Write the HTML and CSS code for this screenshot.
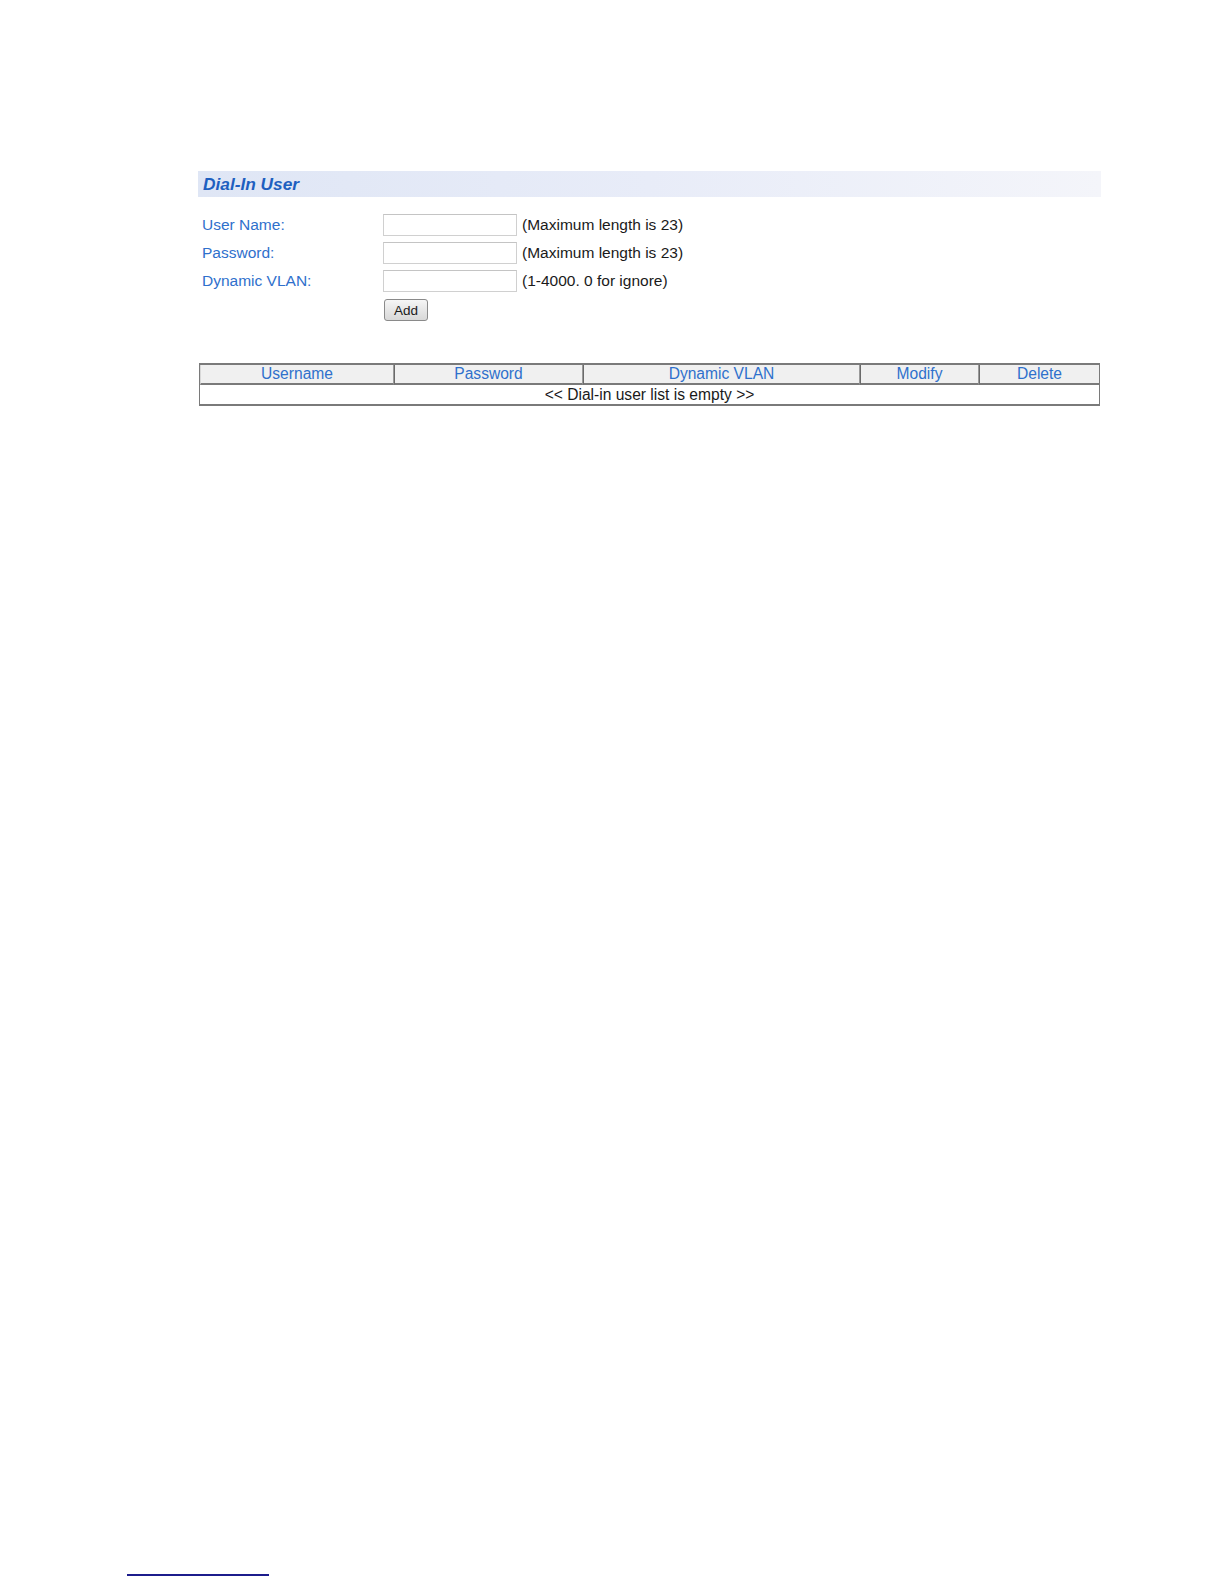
FILE: index.html
```html
<!DOCTYPE html>
<html>
<head>
<meta charset="utf-8">
<link rel="stylesheet" href="styles.css">
</head>
<body>
<div class="page">
  <div class="panel">
    <div class="title-bar"><span class="title">Dial-In User</span></div>
    <div class="form">
      <div class="row">
        <label class="label">User Name:</label>
        <input class="field" type="text">
        <span class="hint">(Maximum length is 23)</span>
      </div>
      <div class="row">
        <label class="label">Password:</label>
        <input class="field" type="password">
        <span class="hint">(Maximum length is 23)</span>
      </div>
      <div class="row">
        <label class="label">Dynamic VLAN:</label>
        <input class="field" type="text">
        <span class="hint">(1-4000. 0 for ignore)</span>
      </div>
      <div class="row button-row">
        <span class="label"></span>
        <button class="btn">Add</button>
      </div>
    </div>
    <table class="list">
      <tr>
        <th class="c1">Username</th>
        <th class="c2">Password</th>
        <th class="c3">Dynamic VLAN</th>
        <th class="c4">Modify</th>
        <th class="c5">Delete</th>
      </tr>
      <tr>
        <td colspan="5">&lt;&lt; Dial-in user list is empty &gt;&gt;</td>
      </tr>
    </table>
  </div>
  <div class="footer-line"></div>
</div>
</body>
</html>
```
FILE: styles.css
```css
html, body {
  margin: 0;
  padding: 0;
  background: #ffffff;
}
body {
  font-family: "Liberation Sans", Arial, sans-serif;
  font-size: 15.5px;
  color: #1a1a1a;
}
.page {
  height: 1584px;
  display: flex;
  flex-direction: column;
  overflow: hidden;
}
.panel {
  padding-top: 171px;
  margin-left: 198px;
  width: 903px;
}
.title-bar {
  height: 26px;
  background: linear-gradient(to right, #dfe6f5 0%, #e8ecf8 50%, #f4f5fa 100%);
  display: flex;
  align-items: center;
  padding-left: 5px;
}
.title {
  font-weight: bold;
  font-style: italic;
  font-size: 17.3px;
  color: #1e5fc0;
}
.form {
  padding-top: 14px;
  padding-left: 4px;
}
.row {
  display: flex;
  align-items: center;
  height: 28px;
}
.label {
  width: 181px;
  color: #2f70cc;
  flex: none;
}
.field {
  width: 134px;
  height: 22px;
  box-sizing: border-box;
  border: 1px solid #d0d0d0;
  border-top-color: #c4c4c4;
  background: #ffffff;
  margin: 0;
  padding: 0 2px;
  font-family: inherit;
  font-size: 14px;
}
.hint {
  margin-left: 5px;
  color: #1a1a1a;
}
.button-row {
  height: 30px;
  align-items: flex-start;
  padding-top: 4px;
  box-sizing: border-box;
}
.btn {
  margin-left: 1px;
  width: 44px;
  height: 22px;
  border: 1px solid #8a8a8a;
  border-radius: 3px;
  background: linear-gradient(to bottom, #f6f6f6 0%, #e6e6e6 50%, #d8d8d8 100%);
  font-family: inherit;
  font-size: 13.5px;
  color: #1a1a1a;
  padding: 0;
}
.list {
  margin-top: 38px;
  margin-left: 1px;
  width: 901px;
  border-collapse: separate;
  border-spacing: 0;
  border: 1px solid #7a7a7a;
  border-top: 2px solid #7a7a7a;
  border-bottom: 2px solid #7a7a7a;
  table-layout: fixed;
  font-size: 15.6px;
}
.list th {
  height: 18px;
  background: #f0f0f0;
  font-weight: normal;
  color: #2f70cc;
  padding: 0;
  border-right: 1px solid #9a9a9a;
  border-left: 1px solid #6a6a6a;
  border-bottom: 2px solid #7a7a7a;
  text-align: center;
  line-height: 18px;
}
.list th.c1 { border-left: 1px solid #d8d8d8; width: 192px; }
.list th.c2 { width: 187px; }
.list th.c3 { width: 275px; }
.list th.c4 { width: 117px; }
.list th.c5 { border-right: none; }
.list td {
  height: 19px;
  line-height: 19px;
  padding: 0;
  text-align: center;
  color: #1a1a1a;
}
.footer-line {
  margin-top: auto;
  margin-bottom: 8px;
  margin-left: 127px;
  width: 142px;
  height: 2px;
  background: #1c1c8c;
  flex: none;
}
```
